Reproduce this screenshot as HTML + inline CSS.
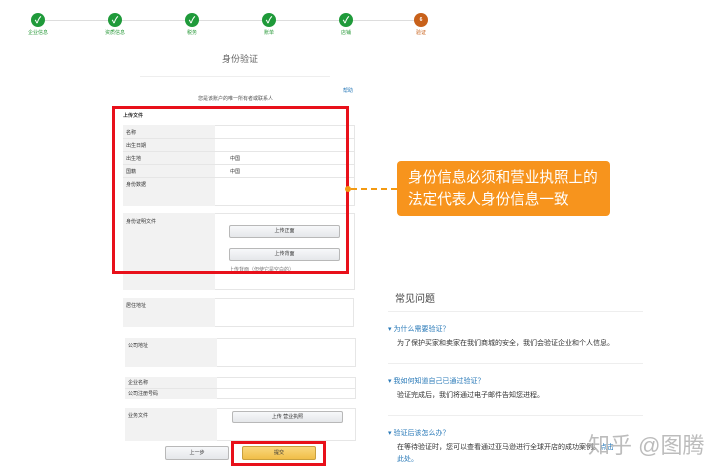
<!DOCTYPE html>
<html><head><meta charset="utf-8"><style>
*{margin:0;padding:0;box-sizing:border-box}
body{width:720px;height:475px;background:#fff;position:relative;overflow:hidden;font-family:"Liberation Sans","Noto Sans CJK SC",sans-serif;color:#333}
.a{position:absolute}
.st{position:absolute;top:13px;width:14px;height:14px;border-radius:50%;background:#1f9a3a;color:#fff;font-size:9px;line-height:14px;text-align:center;font-weight:bold}
.sl{position:absolute;top:29px;font-size:5px;color:#2a9a3a;width:40px;text-align:center}
.t{font-size:5px;color:#333;position:absolute;white-space:nowrap}
.g{position:absolute;background:#f2f2f2}
.w{position:absolute;background:#fff;border:1px solid #e6e6e6}
.btn{position:absolute;background:linear-gradient(#f7f8fa,#e5e7ea);border:1px solid #b8b8b8;border-radius:2px;font-size:5px;text-align:center}
.q{position:absolute;left:388px;font-size:7px;color:#2a7ab8;white-space:nowrap}
.ans{position:absolute;left:397px;font-size:7px;color:#333;white-space:nowrap}
.hr{position:absolute;left:388px;width:255px;height:1px;background:#eee}
</style></head><body>
<div class="a" style="left:45px;top:20px;width:376px;height:1px;background:#ddd"></div>
<div class="st" style="left:31px">✓</div><div class="st" style="left:108px">✓</div><div class="st" style="left:185px">✓</div><div class="st" style="left:262px">✓</div><div class="st" style="left:339px">✓</div>
<div class="st" style="left:414px;background:#c8611a;font-size:5px">6</div>
<div class="sl" style="left:18px">企业信息</div><div class="sl" style="left:95px">资质信息</div><div class="sl" style="left:172px">税务</div><div class="sl" style="left:249px">账单</div><div class="sl" style="left:326px">店铺</div><div class="sl" style="left:401px;color:#c8611a">验证</div>
<div class="a" style="left:200px;top:52px;width:80px;text-align:center;font-size:9px;color:#666">身份验证</div>
<div class="a" style="left:140px;top:76px;width:190px;height:1px;background:#eee"></div>
<div class="t" style="left:343px;top:87px;color:#2a7ab8">帮助</div>
<div class="t" style="left:198px;top:95px;color:#555">您是该账户的唯一所有者或联系人</div>
<div class="t" style="left:123px;top:112px;font-weight:bold">上传文件</div>
<div class="g" style="left:123px;top:125px;width:92px;height:81px"></div>
<div class="w" style="left:215px;top:125px;width:140px;height:81px;border-left:none"></div>
<div class="a" style="left:123px;top:138px;width:232px;height:1px;background:#e6e6e6"></div>
<div class="a" style="left:123px;top:151px;width:232px;height:1px;background:#e6e6e6"></div>
<div class="a" style="left:123px;top:164px;width:232px;height:1px;background:#e6e6e6"></div>
<div class="a" style="left:123px;top:177px;width:232px;height:1px;background:#e6e6e6"></div>
<div class="t" style="left:126px;top:129px">名称</div><div class="t" style="left:126px;top:142px">出生日期</div><div class="t" style="left:126px;top:155px">出生地</div><div class="t" style="left:126px;top:168px">国籍</div><div class="t" style="left:126px;top:181px">身份数据</div>
<div class="t" style="left:230px;top:155px">中国</div><div class="t" style="left:230px;top:168px">中国</div>
<div class="g" style="left:123px;top:213px;width:92px;height:77px"></div>
<div class="w" style="left:215px;top:213px;width:140px;height:77px;border-left:none"></div>
<div class="t" style="left:126px;top:218px">身份证明文件</div>
<div class="btn" style="left:229px;top:225px;width:111px;height:13px;line-height:11px">上传正面</div>
<div class="btn" style="left:229px;top:248px;width:111px;height:13px;line-height:11px">上传背面</div>
<div class="t" style="left:229px;top:266px;color:#777">上传背面（但使它是空白的）</div>
<div class="a" style="left:112px;top:106px;width:237px;height:168px;border:3px solid #e8101a"></div>
<div class="a" style="left:345px;top:186px;width:6px;height:6px;border-radius:50%;background:#f39a12"></div>
<div class="a" style="left:351px;top:188px;width:46px;border-top:2px dashed #f39a12"></div>
<div class="a" style="left:397px;top:161px;width:213px;height:55px;background:#f7941d;border-radius:4px;color:#fff;font-size:14.6px;line-height:22px;padding:6px 0 0 11px;white-space:nowrap">身份信息必须和营业执照上的<br>法定代表人身份信息一致</div>
<div class="g" style="left:123px;top:298px;width:92px;height:29px"></div>
<div class="w" style="left:215px;top:298px;width:139px;height:29px;border-left:none"></div>
<div class="t" style="left:126px;top:302px">居住地址</div>
<div class="g" style="left:125px;top:338px;width:92px;height:29px"></div>
<div class="w" style="left:217px;top:338px;width:139px;height:29px;border-left:none"></div>
<div class="t" style="left:128px;top:342px">公司地址</div>
<div class="g" style="left:125px;top:377px;width:92px;height:22px"></div>
<div class="w" style="left:217px;top:377px;width:139px;height:22px;border-left:none"></div>
<div class="a" style="left:125px;top:388px;width:231px;height:1px;background:#e6e6e6"></div>
<div class="t" style="left:128px;top:379px">企业名称</div><div class="t" style="left:128px;top:390px">公司注册号码</div>
<div class="g" style="left:125px;top:408px;width:92px;height:33px"></div>
<div class="w" style="left:217px;top:408px;width:139px;height:33px;border-left:none"></div>
<div class="t" style="left:128px;top:412px">业务文件</div>
<div class="btn" style="left:232px;top:411px;width:111px;height:12px;line-height:10px">上传 营业执照</div>
<div class="btn" style="left:165px;top:446px;width:64px;height:14px;line-height:12px">上一步</div>
<div class="btn" style="left:242px;top:446px;width:74px;height:14px;line-height:12px;background:linear-gradient(#f9d77e,#f1be48);border-color:#c9a03e">提交</div>
<div class="a" style="left:231px;top:441px;width:95px;height:25px;border:3px solid #e8101a"></div>
<div class="a" style="left:395px;top:290px;font-size:10px;color:#444">常见问题</div>
<div class="hr" style="top:311px"></div>
<div class="q" style="top:324px">▾ 为什么需要验证？</div>
<div class="ans" style="top:338px">为了保护买家和卖家在我们商城的安全，我们会验证企业和个人信息。</div>
<div class="hr" style="top:363px"></div>
<div class="q" style="top:376px">▾ 我如何知道自己已通过验证？</div>
<div class="ans" style="top:390px">验证完成后，我们将通过电子邮件告知您进程。</div>
<div class="hr" style="top:415px"></div>
<div class="q" style="top:428px">▾ 验证后该怎么办？</div>
<div class="ans" style="top:442px">在等待验证时，您可以查看通过亚马逊进行全球开店的成功案例。<span style="color:#2a7ab8">点击</span></div>
<div class="ans" style="top:454px;color:#2a7ab8">此处。</div>
<div class="a" style="left:588px;top:428px;font-size:22px;color:rgba(160,160,160,0.7);white-space:nowrap">知乎 @图腾</div>
</body></html>
